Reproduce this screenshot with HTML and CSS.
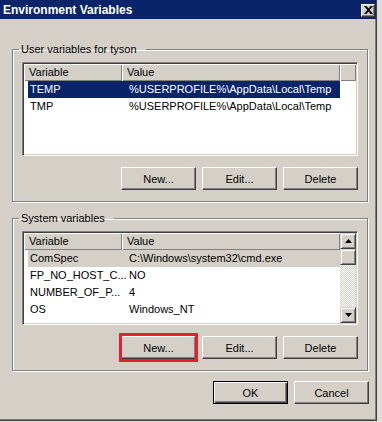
FILE: index.html
```html
<!DOCTYPE html>
<html lang="en">
<head>
  <meta charset="UTF-8" />
  <title>Environment Variables</title>
  <link rel="stylesheet" href="styles.css">
</head>
<body>
  <div class="window">
    <div class="titlebar">
      <span class="title">Environment Variables</span>
      <button class="close-btn" aria-label="Close">
        <svg width="9" height="8" viewBox="0 0 9 8">
          <path d="M0 0h2.4l2.1 2.6 2.1-2.6h2.4l-3.3 4 3.3 4h-2.4l-2.1-2.6-2.1 2.6h-2.4l3.3-4z" fill="#000"/>
        </svg>
      </button>
    </div>

    <div class="content">
      <!-- User variables -->
      <fieldset class="group">
        <legend>User variables for tyson</legend>
        <div class="list">
          <div class="list-header">
            <span class="col">Variable</span>
            <span class="col">Value</span>
            <span class="col"></span>
          </div>
          <div class="row selected">
            <span>TEMP</span>
            <span>%USERPROFILE%\AppData\Local\Temp</span>
          </div>
          <div class="row">
            <span>TMP</span>
            <span>%USERPROFILE%\AppData\Local\Temp</span>
          </div>
        </div>
        <div class="button-row">
          <button class="btn">New...</button>
          <button class="btn">Edit...</button>
          <button class="btn">Delete</button>
        </div>
      </fieldset>

      <!-- System variables -->
      <fieldset class="group">
        <legend>System variables</legend>
        <div class="list list-scroll">
          <div class="list-main">
            <div class="list-header">
              <span class="col">Variable</span>
              <span class="col">Value</span>
            </div>
            <div class="row inactive">
              <span>ComSpec</span>
              <span>C:\Windows\system32\cmd.exe</span>
            </div>
            <div class="row">
              <span>FP_NO_HOST_C...</span>
              <span>NO</span>
            </div>
            <div class="row">
              <span>NUMBER_OF_P...</span>
              <span>4</span>
            </div>
            <div class="row">
              <span>OS</span>
              <span>Windows_NT</span>
            </div>
          </div>
          <div class="scrollbar">
            <div class="scroll-btn">
              <svg width="7" height="4" viewBox="0 0 7 4"><path d="M3.5 0L7 4H0z" fill="#000"/></svg>
            </div>
            <div class="scroll-thumb"></div>
            <div class="scroll-track"></div>
            <div class="scroll-btn">
              <svg width="7" height="4" viewBox="0 0 7 4"><path d="M0 0h7L3.5 4z" fill="#000"/></svg>
            </div>
          </div>
        </div>
        <div class="button-row">
          <button class="btn marked">New...</button>
          <button class="btn">Edit...</button>
          <button class="btn">Delete</button>
        </div>
      </fieldset>

      <div class="dialog-buttons">
        <button class="btn btn-default">OK</button>
        <button class="btn">Cancel</button>
      </div>
    </div>
  </div>
</body>
</html>
```

FILE: styles.css
```css
/* Classic Windows dialog look */
* {
  margin: 0;
  padding: 0;
  box-sizing: border-box;
}

body {
  width: 382px;
  height: 422px;
  background: #dedcd6;
  font-family: "Liberation Sans", Arial, sans-serif;
  font-size: 11px;
  color: #000;
  overflow: hidden;
}

.window {
  width: 377px;
  height: 421px;
  background: #d4d0c8;
  border-right: 1px solid #404040;
  border-bottom: 1px solid #404040;
  box-shadow: inset -1px -1px 0 #808080;
  display: flex;
  flex-direction: column;
}

.titlebar {
  height: 19px;
  background: #0a246a;
  display: flex;
  align-items: center;
  justify-content: space-between;
  padding: 0 1px 0 3px;
}

.title {
  color: #fff;
  font-weight: bold;
  font-size: 12px;
}

.close-btn {
  width: 14px;
  height: 13px;
  margin-top: 1px;
  background: #d4d0c8;
  border: 1px solid;
  border-color: #fff #404040 #404040 #fff;
  box-shadow: inset -1px -1px 0 #808080;
  display: flex;
  align-items: center;
  justify-content: center;
}

.content {
  padding: 24px 0 0 12px;
}

/* Group boxes */
.group {
  width: 356px;
  border: 1px solid #808080;
  box-shadow: 1px 1px 0 #fff, inset 1px 1px 0 #fff;
  padding: 6px 9px 11px 9px;
  margin-bottom: 10px;
}

.group legend {
  line-height: 13px;
  padding: 0 9px 0 2px;
  margin-left: -3px;
}

/* List views */
.list {
  height: 94px;
  background: #fff;
  border: 1px solid;
  border-color: #808080 #fff #fff #808080;
  box-shadow: inset 1px 1px 0 #404040, inset -1px -1px 0 #d4d0c8;
  padding: 1px;
  overflow: hidden;
}

.list-header {
  display: grid;
  grid-template-columns: 98px 218px 1fr;
  height: 17px;
}

.list-scroll .list-header {
  grid-template-columns: 98px 218px;
}

.list-header .col {
  background: #d4d0c8;
  line-height: 17px;
  padding-left: 5px;
  box-shadow: inset 1px 1px 0 #fff, inset -1px -1px 0 #808080;
}

.row {
  display: grid;
  grid-template-columns: 94px 218px;
  margin-left: 4px;
  width: 312px;
  height: 17px;
  line-height: 17px;
  white-space: nowrap;
  overflow: hidden;
}

.row span:first-child {
  padding-left: 2px;
}

.row span:last-child {
  padding-left: 7px;
}

.row.selected {
  background: #0a246a;
  color: #fff;
}

.row.inactive {
  background: #d4d0c8;
}

.list-scroll {
  display: flex;
}

.list-main {
  flex: 1;
  overflow: hidden;
}

/* Scrollbar */
.scrollbar {
  width: 16px;
  display: flex;
  flex-direction: column;
}

.scroll-btn,
.scroll-thumb {
  height: 16px;
  background: #d4d0c8;
  border: 1px solid;
  border-color: #d4d0c8 #404040 #404040 #d4d0c8;
  box-shadow: inset 1px 1px 0 #fff, inset -1px -1px 0 #808080;
}

.scroll-btn {
  display: flex;
  align-items: center;
  justify-content: center;
}

.scroll-track {
  flex: 1;
  background: repeating-conic-gradient(#fff 0 25%, #d4d0c8 0 50%) 0 0 / 2px 2px;
}

/* Buttons */
.button-row {
  display: flex;
  justify-content: flex-end;
  gap: 6px;
  margin-top: 11px;
}

.btn {
  width: 75px;
  height: 23px;
  font-family: inherit;
  font-size: 11px;
  color: #000;
  background: #d4d0c8;
  border: 1px solid;
  border-color: #fff #404040 #404040 #fff;
  box-shadow: inset -1px -1px 0 #808080;
}

.btn-default {
  border-color: #000;
  box-shadow: inset 1px 1px 0 #fff, inset -1px -1px 0 #404040, inset -2px -2px 0 #808080;
}

/* Red annotation box drawn over the button */
.marked {
  position: relative;
}

.marked::after {
  content: "";
  position: absolute;
  top: -4px;
  bottom: -4px;
  left: -3px;
  right: -3px;
  border: 3px solid #e51f2b;
}

.dialog-buttons {
  width: 357px;
  display: flex;
  justify-content: flex-end;
  gap: 6px;
  margin-top: 3px;
}
```
